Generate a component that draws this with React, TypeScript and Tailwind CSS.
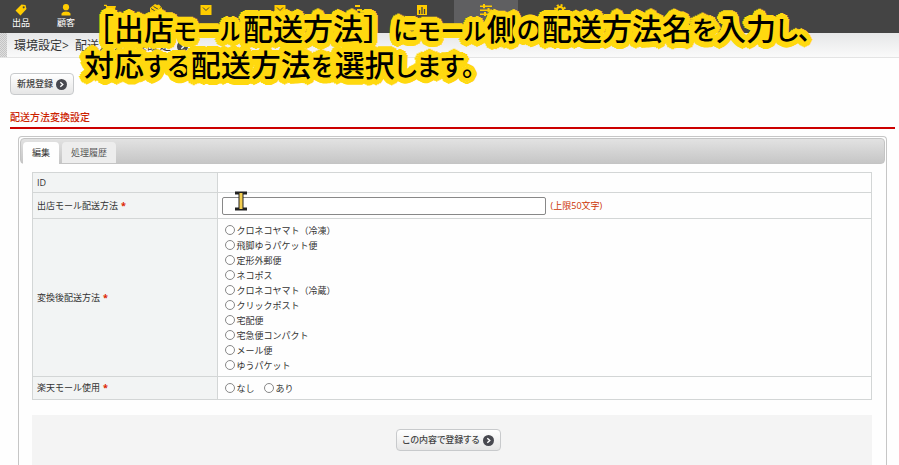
import React from "react";

type NavItem = { icon: React.ReactNode; label: string; width: string; active?: boolean; iconOnly?: boolean };

const Tag = () => (
  <svg viewBox="0 0 12 12" className="h-3 w-3" fill="#fc0">
    <path fillRule="evenodd" d="M6.5 0.5 10.5 1 11.5 5 5.5 11.5 0.5 6.5zM8.7 2.3a1 1 0 1 0 .01 0z" />
  </svg>
);
const Person = () => (
  <svg viewBox="0 0 12 12" className="h-3 w-3" fill="#fc0">
    <circle cx="6" cy="3.2" r="3.1" />
    <path d="M1.5 11.5V9.5Q2.5 7.5 6 7.5T10.5 9.5V11.5z" />
  </svg>
);
const Cart = () => (
  <svg viewBox="0 0 12 12" className="h-3 w-3" fill="#fc0">
    <path d="M0 .8h2.6l.6 1.2H12L10.5 7H4.3l.3 1H11v1.2H3.6L1.8 2H0z" />
    <circle cx="4.5" cy="10.7" r="1.1" />
    <circle cx="9.5" cy="10.7" r="1.1" />
  </svg>
);
const Box = () => (
  <svg viewBox="0 0 12 12" className="h-3 w-3">
    <path fill="#fc0" d="M0 4 5 0l2 1 2-.5L12 4v5l-6 3-6-4z" />
    <path stroke="#444" fill="none" d="M1 4.5l5 3 5-4M3.5 2.5l5 3" />
  </svg>
);
const Mail = () => (
  <svg viewBox="0 0 12 12" className="h-3 w-3">
    <path fill="#fc0" d="M.5 1h11v10H.5z" />
    <path stroke="#444" fill="none" d="M3 3.5 6 6.5l3-3" />
  </svg>
);
const List = () => (
  <svg viewBox="0 0 12 12" className="h-3 w-3" fill="#fc0">
    <path d="M1 1h5v2H1zM3 5h5v2H3zM3 9h5v2H3z" />
  </svg>
);
const Chart = () => (
  <svg viewBox="0 0 12 12" className="h-3 w-3">
    <path fill="#fc0" d="M1 1h10v10H1z" />
    <path stroke="#444" strokeWidth="1.3" d="M3.5 6v4M6 3v7M8.5 5v5" />
  </svg>
);
const Sliders = () => (
  <svg viewBox="0 0 12 12" className="h-3 w-3" fill="#fc0">
    <path d="M0 1.5h12V3H0zM0 5.5h12V7H0zM0 9.5h12V11H0z" />
    <path d="M3 0h2v4.2H3zM7.5 4h2v4.2h-2zM4 8h2v4H4z" />
  </svg>
);
const Gear = () => (
  <svg viewBox="0 0 12 12" className="h-3 w-3" fill="none" stroke="#fc0">
    <circle cx="6" cy="6" r="3.2" strokeWidth="2.2" />
    <circle cx="6" cy="6" r="5" strokeWidth="2" strokeDasharray="2 1.93" />
  </svg>
);

const nav: NavItem[] = [
  { icon: <Tag />, label: "出品", width: "w-[42px]" },
  { icon: <Person />, label: "顧客", width: "w-12" },
  { icon: <Cart />, label: "受注", width: "w-10", iconOnly: true },
  { icon: <Box />, label: "商品", width: "w-[52px]", iconOnly: true },
  { icon: <Mail />, label: "メール", width: "w-12", iconOnly: true },
  { icon: <Mail />, label: "一括メール", width: "w-[100px]", iconOnly: true },
  { icon: <List />, label: "一覧", width: "w-[60px]", iconOnly: true },
  { icon: <Chart />, label: "集計", width: "w-16", iconOnly: true },
  { icon: <Sliders />, label: "環境設定", width: "w-16", active: true, iconOnly: true },
  { icon: <Gear />, label: "管理", width: "w-[84px]", iconOnly: true },
];

const methods = [
  "クロネコヤマト（冷凍）",
  "飛脚ゆうパケット便",
  "定形外郵便",
  "ネコポス",
  "クロネコヤマト（冷蔵）",
  "クリックポスト",
  "宅配便",
  "宅急便コンパクト",
  "メール便",
  "ゆうパケット",
];

const Arrow = () => (
  <svg viewBox="0 0 11 11" className="h-[11px] w-[11px] shrink-0">
    <circle cx="5.5" cy="5.5" r="5.5" fill="#484950" />
    <path d="M4.3 3.2 6.8 5.5 4.3 7.8" stroke="#fff" strokeWidth="1.4" fill="none" />
  </svg>
);

function ActionButton({ children }: { children: React.ReactNode }) {
  return (
    <button
      type="button"
      className="flex items-center gap-[3px] rounded border border-[#c8cacc] bg-linear-to-b from-white to-[#e6e6e6] px-1.5 py-1 leading-3 font-medium text-[#444] [font-feature-settings:'palt']"
    >
      {children}
      <Arrow />
    </button>
  );
}

function Radio({ name, label }: { name: string; label: string }) {
  return (
    <label className="flex h-[15px] items-center gap-0.5">
      <input
        type="radio"
        name={name}
        className="h-[10px] w-[10px] appearance-none rounded-full border border-[#888] bg-white checked:border-[3px]"
      />
      <span className="pt-0.5 leading-3">{label}</span>
    </label>
  );
}

function Row({
  title,
  required,
  htmlFor,
  height,
  children,
}: {
  title: string;
  required?: boolean;
  htmlFor?: string;
  height: string;
  children?: React.ReactNode;
}) {
  return (
    <tr className={height}>
      <th scope="row" className="w-[22%] border border-[#d3d6d6] bg-[#f2f4f4] px-1 text-left font-normal">
        <label htmlFor={htmlFor}>{title}</label>
        {required && <span className="ml-[3px] font-bold text-[#d20]">*</span>}
      </th>
      <td className="border border-[#d3d6d6] bg-[#fefefe] px-1">{children}</td>
    </tr>
  );
}

const Hira = ({ children }: { children: string }) => (
  <span className="text-[26px] leading-none [font-feature-settings:'palt']">{children}</span>
);

const Kata = ({ children }: { children: string }) => (
  <span className="text-[24px] leading-none [font-feature-settings:'palt']">{children}</span>
);

export default function App() {
  return (
    <div className='relative h-screen overflow-hidden bg-[#fefefe] font-["Open_Sans","Noto_Sans_CJK_JP",sans-serif] text-[9px] leading-3 text-[#333]'>
      <nav className="flex h-[33px] overflow-hidden bg-[#444]">
        {nav.map((n) => (
          <a
            key={n.label}
            href="#"
            aria-label={n.label}
            className={`flex shrink-0 flex-col items-center gap-px pt-1 text-white ${n.width} ${n.active ? "bg-[#5f5f61]" : ""}`}
          >
            {n.icon}
            {!n.iconOnly && <span className="whitespace-nowrap">{n.label}</span>}
          </a>
        ))}
      </nav>

      <div className="flex h-[25px] border-b border-[#e4e4e4] bg-linear-to-b from-[#e6e7e8] to-[#fafafa]">
        <div className="w-[7px] bg-[repeating-conic-gradient(#c4c4c4_0_25%,#dedede_0_50%)] bg-size-[2px_2px]" />
        <h1 className="flex items-center gap-1.5 pt-0.5 pl-[7px] text-xs text-[#333]">
          <span>環境設定&gt;</span>
          <span>配送方法変換設定</span>
          <Arrow />
        </h1>
      </div>

      <main className="pr-1 pl-[10px]">
        <div className="flex pt-[15px]">
          <ActionButton>新規登録</ActionButton>
        </div>

        <h2 className="mt-[15px] border-b-2 border-[#c00] pb-[3px] text-[10px] leading-[14px] font-medium text-[#c20]">
          配送方法変換設定
        </h2>

        <section className="mt-[7px] mr-2 ml-2 rounded-t border border-b-0 border-[#c6c6c6] p-px">
          <div
            role="tablist"
            className="flex h-[26px] items-end gap-[3px] rounded border border-[#c4c4c4] bg-linear-to-b from-[#e2e2e2] to-[#c6c6c6] pl-0.5"
          >
            <button role="tab" aria-selected="true" className="-mb-px h-[22px] w-9 rounded-t bg-[#fefefe]">
              編集
            </button>
            <button role="tab" aria-selected="false" className="h-[21px] w-[54px] rounded-t bg-[#ededed] text-[#555]">
              処理履歴
            </button>
          </div>

          <div className="pt-2 pr-[13px] pb-8 pl-3">
            <table className="w-full border-collapse">
              <tbody>
                <Row title="ID" height="h-5" />
                <Row title="出店モール配送方法" required htmlFor="mall-method" height="h-[26px]">
                  <div className="flex items-center gap-[5px]">
                    <input
                      id="mall-method"
                      type="text"
                      maxLength={50}
                      className="h-[18px] w-[324px] rounded-xs border border-[#888] bg-white px-1"
                    />
                    <span className="text-[#c30]">(上限50文字)</span>
                  </div>
                </Row>
                <Row title="変換後配送方法" required height="h-[158px]">
                  <div className="flex flex-col pl-[3px]">
                    {methods.map((m) => (
                      <Radio key={m} name="method" label={m} />
                    ))}
                  </div>
                </Row>
                <Row title="楽天モール使用" required height="h-[23px]">
                  <div className="flex gap-[9px] pl-[3px]">
                    <Radio name="rakuten" label="なし" />
                    <Radio name="rakuten" label="あり" />
                  </div>
                </Row>
              </tbody>
            </table>

            <div className="mt-[15px] flex h-[50px] items-center justify-center bg-[#f4f4f4] pr-2">
              <ActionButton>この内容で登録する</ActionButton>
            </div>
          </div>
        </section>
      </main>

      <p className='absolute top-[9px] left-[84px] font-["Noto_Sans_CJK_JP",sans-serif] text-[30px] leading-9 font-medium whitespace-nowrap text-black [text-shadow:6px_0_#ffd90f,5px_2px_#ffd90f,4px_4px_#ffd90f,2px_5px_#ffd90f,0_6px_#ffd90f,-2px_5px_#ffd90f,-4px_4px_#ffd90f,-5px_2px_#ffd90f,-6px_0_#ffd90f,-5px_-2px_#ffd90f,-4px_-4px_#ffd90f,-2px_-5px_#ffd90f,0_-6px_#ffd90f,2px_-5px_#ffd90f,4px_-4px_#ffd90f,5px_-2px_#ffd90f,3px_0_#ffd90f,-3px_0_#ffd90f,0_3px_#ffd90f,0_-3px_#ffd90f,2px_2px_#ffd90f,-2px_2px_#ffd90f,2px_-2px_#ffd90f,-2px_-2px_#ffd90f]'>
        ［出店<Kata>モール</Kata>配送方法］<Hira>に</Hira><Kata>モール</Kata>側<Hira>の</Hira>配送方法名<Hira>を</Hira>入力<Hira>し、</Hira>
        <br />
        対応<Hira>する</Hira>配送方法<Hira>を</Hira>選択<Hira>します。</Hira>
      </p>

      <svg viewBox="0 0 14 20" className="absolute top-[191px] left-[234px] h-5 w-[14px]">
        <path d="M1 .5h12v3H9.5v13H13v3H1v-3h3.5v-13H1z" fill="#222" />
        <path d="M5.5 2h3v16h-3z" fill="#f4cf50" />
      </svg>
    </div>
  );
}
